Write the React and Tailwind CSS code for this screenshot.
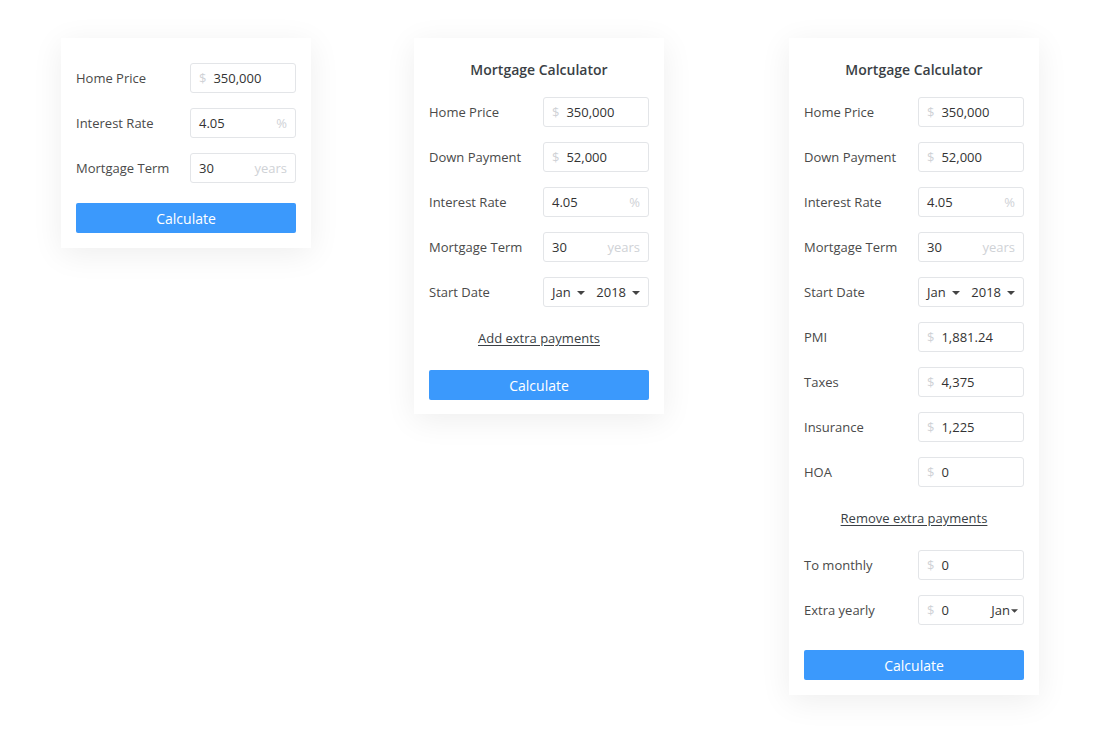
import React from 'react';

// small caret used by the dropdown-ish fields
function Caret() {
  return (
    <svg width="8" height="4" viewBox="0 0 8 4" className="inline-block ml-[6px] mb-[2px]">
      <path d="M0 0h8L4 4z" fill="#444" />
    </svg>
  );
}

function Field({ label, prefix, value, suffix }) {
  return (
    <div className="flex items-center justify-between h-[30px]">
      <span className="text-[13px] text-[#4a4a4a] pt-[2px]">{label}</span>
      <div className="w-[106px] h-[30px] border border-[#e3e5e8] rounded-[3px] flex items-center px-[8px] pt-[2px] text-[13px]">
        {prefix && <span className="text-[#cfd2d6] mr-[7px]">{prefix}</span>}
        <span className="text-[#333] flex-1">{value}</span>
        {suffix && <span className="text-[#cfd2d6]">{suffix}</span>}
      </div>
    </div>
  );
}

function DateField() {
  return (
    <div className="flex items-center justify-between h-[30px]">
      <span className="text-[13px] text-[#4a4a4a] pt-[2px]">Start Date</span>
      <div className="w-[106px] h-[30px] border border-[#e3e5e8] rounded-[3px] flex items-center justify-between px-[8px] pt-[2px] text-[13px] text-[#333]">
        <span>Jan<Caret /></span>
        <span>2018<Caret /></span>
      </div>
    </div>
  );
}

function YearlyField() {
  return (
    <div className="flex items-center justify-between h-[30px]">
      <span className="text-[13px] text-[#4a4a4a] pt-[2px]">Extra yearly</span>
      <div className="w-[106px] h-[30px] border border-[#e3e5e8] rounded-[3px] flex items-center pl-[8px] pr-[5px] pt-[2px] text-[13px]">
        <span className="text-[#cfd2d6] mr-[7px]">$</span>
        <span className="text-[#333] flex-1">0</span>
        <span className="text-[#333]">Jan<svg width="7" height="4" viewBox="0 0 8 4" className="inline-block ml-[1px] mb-[2px]"><path d="M0 0h8L4 4z" fill="#444" /></svg></span>
      </div>
    </div>
  );
}

function Button() {
  return (
    <button className="w-full h-[30px] bg-[#3b99fc] rounded-[2px] text-white text-[14px]">
      Calculate
    </button>
  );
}

function Title() {
  return (
    <h2 className="text-center text-[14px] font-semibold text-[#3a3f45] h-[19px] leading-[19px] mb-[18px]">
      Mortgage Calculator
    </h2>
  );
}

function LinkText({ children }) {
  return (
    <div className="text-center text-[13px] text-[#3a3f45] underline underline-offset-2 leading-[18px]">
      {children}
    </div>
  );
}

export default function App() {
  return (
    <div
      className="w-[1100px] h-[732px] bg-white flex items-start pl-[61px] pt-[38px]"
      style={{ fontFamily: '"Open Sans", "Noto Sans", sans-serif' }}
    >
      {/* Simple */}
      <div className="w-[250px] bg-white shadow-[0_6px_30px_rgba(0,0,0,0.07)] px-[15px] pt-[25px] pb-[15px]">
        <div className="flex flex-col gap-[15px]">
          <Field label="Home Price" prefix="$" value="350,000" />
          <Field label="Interest Rate" value="4.05" suffix="%" />
          <Field label="Mortgage Term" value="30" suffix="years" />
        </div>
        <div className="mt-[20px]">
          <Button />
        </div>
      </div>

      {/* With start date */}
      <div className="ml-[103px] w-[250px] bg-white shadow-[0_6px_30px_rgba(0,0,0,0.07)] px-[15px] pt-[22px] pb-[14px]">
        <Title />
        <div className="flex flex-col gap-[15px]">
          <Field label="Home Price" prefix="$" value="350,000" />
          <Field label="Down Payment" prefix="$" value="52,000" />
          <Field label="Interest Rate" value="4.05" suffix="%" />
          <Field label="Mortgage Term" value="30" suffix="years" />
          <DateField />
        </div>
        <div className="mt-[22px]">
          <LinkText>Add extra payments</LinkText>
        </div>
        <div className="mt-[23px]">
          <Button />
        </div>
      </div>

      {/* Full */}
      <div className="ml-[125px] w-[250px] bg-white shadow-[0_6px_30px_rgba(0,0,0,0.07)] px-[15px] pt-[22px] pb-[15px]">
        <Title />
        <div className="flex flex-col gap-[15px]">
          <Field label="Home Price" prefix="$" value="350,000" />
          <Field label="Down Payment" prefix="$" value="52,000" />
          <Field label="Interest Rate" value="4.05" suffix="%" />
          <Field label="Mortgage Term" value="30" suffix="years" />
          <DateField />
          <Field label="PMI" prefix="$" value="1,881.24" />
          <Field label="Taxes" prefix="$" value="4,375" />
          <Field label="Insurance" prefix="$" value="1,225" />
          <Field label="HOA" prefix="$" value="0" />
        </div>
        <div className="mt-[22px]">
          <LinkText>Remove extra payments</LinkText>
        </div>
        <div className="mt-[23px] flex flex-col gap-[15px]">
          <Field label="To monthly" prefix="$" value="0" />
          <YearlyField />
        </div>
        <div className="mt-[25px]">
          <Button />
        </div>
      </div>
    </div>
  );
}
